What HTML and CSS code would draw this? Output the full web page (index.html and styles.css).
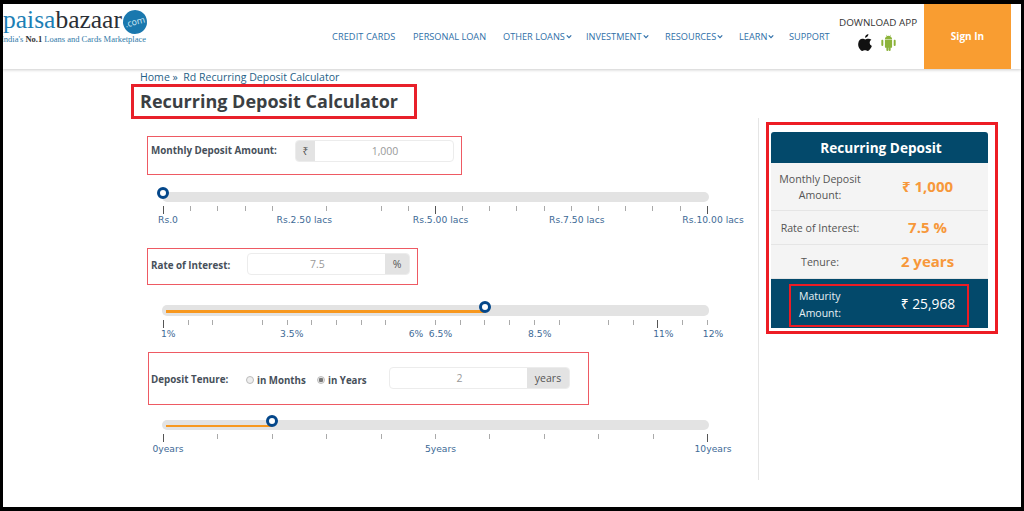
FILE: index.html
```html
<!DOCTYPE html>
<html lang="en">
<head>
<meta charset="utf-8">
<title>Recurring Deposit Calculator</title>
<link rel="stylesheet" href="styles.css">
</head>
<body>
<div class="frame">
  <header class="topbar">
    <div class="logo">
      <div class="logo-main"><span class="logo-paisa">paisa</span><span class="logo-bazaar">bazaar</span><span class="logo-com">.com</span></div>
      <div class="logo-tag">India's <b>No.1</b> <span>Loans and Cards Marketplace</span></div>
    </div>
    <nav class="nav">
      <a class="nav-credit">CREDIT CARDS</a>
      <a class="nav-personal">PERSONAL LOAN</a>
      <a class="nav-other">OTHER LOANS<svg class="caret" viewBox="0 0 8 6"><path d="M1 1.5 4 4.5 7 1.5" fill="none" stroke="#2f6fa8" stroke-width="1.6"/></svg></a>
      <a class="nav-invest">INVESTMENT<svg class="caret" viewBox="0 0 8 6"><path d="M1 1.5 4 4.5 7 1.5" fill="none" stroke="#2f6fa8" stroke-width="1.6"/></svg></a>
      <a class="nav-res">RESOURCES<svg class="caret" viewBox="0 0 8 6"><path d="M1 1.5 4 4.5 7 1.5" fill="none" stroke="#2f6fa8" stroke-width="1.6"/></svg></a>
      <a class="nav-learn">LEARN<svg class="caret" viewBox="0 0 8 6"><path d="M1 1.5 4 4.5 7 1.5" fill="none" stroke="#2f6fa8" stroke-width="1.6"/></svg></a>
      <a class="nav-support">SUPPORT</a>
    </nav>
    <div class="app">
      <div class="app-title">DOWNLOAD APP</div>
      <div class="app-icons">
        <svg class="icon-apple" viewBox="0 0 16 19"><path fill="#111" d="M11.200 0c.1 1.100-.3 2.100-1 2.900-.7.8-1.700 1.300-2.700 1.200-.1-1 .4-2.100 1-2.800C9.200.6 10.300.1 11.200 0zM14.600 6.500c-1.200.8-1.900 1.900-1.900 3.300 0 1.600.9 2.900 2.400 3.500-.4 1.200-1 2.300-1.700 3.300-.9 1.300-1.800 2.300-2.900 2.300-1.200 0-1.700-.7-3.100-.7-1.400 0-1.900.7-3.100.7-1.100 0-2-1.100-2.900-2.400C.2 14.800-.4 12.700-.1 10.600.2 7.700 2.100 5.400 4.600 5.400c1.300 0 2.300.8 3.200.8.800 0 2-.9 3.500-.8 1.300 0 2.500.4 3.300 1.100z"/></svg>
        <svg class="icon-android" viewBox="0 0 16 19"><path fill="#8cb33a" d="M4 6.500h8v8a1 1 0 0 1-1 1h-.6v2.400a1.100 1.100 0 0 1-2.200 0v-2.400H7.800v2.400a1.100 1.100 0 0 1-2.200 0v-2.400H5a1 1 0 0 1-1-1zM1.100 6.500c.6 0 1.100.5 1.100 1.100v4.800a1.100 1.100 0 0 1-2.200 0V7.600c0-.6.5-1.100 1.100-1.100zM14.900 6.500c.6 0 1.100.5 1.100 1.100v4.800a1.100 1.100 0 0 1-2.200 0V7.600c0-.6.5-1.100 1.100-1.100zM4 5.800C4 4.300 4.900 3 6.200 2.400L5.300 1l.3-.2 1 1.400a4.400 4.400 0 0 1 2.800 0l1-1.400.3.200-.9 1.400C11.100 3 12 4.300 12 5.800z"/></svg>
      </div>
    </div>
    <a class="signin">Sign In</a>
  </header>

  <main class="page">
    <section class="calc">
      <div class="crumb">Home »&nbsp; Rd Recurring Deposit Calculator</div>
      <h1 class="title">Recurring Deposit Calculator</h1>

      <div class="field field-amount">
        <label class="field-label">Monthly Deposit Amount:</label>
        <div class="group group-amount">
          <span class="addon addon-rupee">₹</span>
          <span class="value">1,000</span>
        </div>
      </div>
      <div class="slider slider-amount">
        <div class="track"><span class="thumb thumb-amount"></span></div>
        <div class="ticks">
          <i class="major"></i><i></i><i></i><i></i><i></i><i class="off"></i><i></i><i class="off"></i><i></i><i></i><i class="major"></i><i></i><i></i><i></i><i></i><i></i><i></i><i></i><i></i><i></i><i class="major"></i>
        </div>
        <div class="scale">
          <span class="first" style="left:0%">Rs.0</span>
          <span style="left:25%">Rs.2.50 lacs</span>
          <span style="left:50%">Rs.5.00 lacs</span>
          <span style="left:75%">Rs.7.50 lacs</span>
          <span style="left:100%">Rs.10.00 lacs</span>
        </div>
      </div>

      <div class="field field-rate">
        <label class="field-label">Rate of Interest:</label>
        <div class="group group-rate">
          <span class="value">7.5</span>
          <span class="addon addon-pct">%</span>
        </div>
      </div>
      <div class="slider slider-rate">
        <div class="track track-fill"><span class="fill fill-rate"></span><span class="thumb thumb-rate"></span></div>
        <div class="ticks">
          <i class="major"></i><i></i><i></i><i class="off"></i><i></i><i></i><i></i><i></i><i></i><i></i><i class="off"></i><i></i><i></i><i></i><i></i><i></i><i></i><i class="off"></i><i></i><i></i><i class="major"></i><i></i><i></i>
        </div>
        <div class="scale">
          <span class="first-pct" style="left:0%">1%</span>
          <span style="left:22.7%">3.5%</span>
          <span style="left:45.5%">6%</span>
          <span style="left:50%">6.5%</span>
          <span style="left:68.2%">8.5%</span>
          <span style="left:90.9%">11%</span>
          <span style="left:100%">12%</span>
        </div>
      </div>

      <div class="field field-tenure">
        <label class="field-label">Deposit Tenure:</label>
        <span class="radio radio-months"><span class="dot"></span>in Months</span>
        <span class="radio radio-years"><span class="dot dot-on"></span>in Years</span>
        <div class="group group-tenure">
          <span class="value">2</span>
          <span class="addon addon-years">years</span>
        </div>
      </div>
      <div class="slider slider-tenure">
        <div class="track track-fill"><span class="fill fill-tenure"></span><span class="thumb thumb-tenure"></span></div>
        <div class="ticks">
          <i class="major"></i><i></i><i></i><i></i><i></i><i></i><i></i><i></i><i></i><i></i><i class="major"></i>
        </div>
        <div class="scale">
          <span style="left:0%">0years</span>
          <span style="left:50%">5years</span>
          <span style="left:100%">10years</span>
        </div>
      </div>
    </section>

    <aside class="side">
      <div class="outline">
        <div class="card">
          <h2 class="card-head">Recurring Deposit</h2>
          <div class="row row-a"><div class="row-label">Monthly Deposit Amount:</div><div class="row-value">₹ 1,000</div></div>
          <div class="row row-b"><div class="row-label">Rate of Interest:</div><div class="row-value">7.5 %</div></div>
          <div class="row row-b"><div class="row-label">Tenure:</div><div class="row-value">2 years</div></div>
          <div class="result">
            <div class="result-box">
              <div class="result-label">Maturity Amount:</div>
              <div class="result-value">₹ 25,968</div>
            </div>
          </div>
        </div>
      </div>
    </aside>
  </main>
</div>
</body>
</html>
```
FILE: styles.css
```css
* { box-sizing: border-box; }
html, body { margin: 0; height: 511px; overflow: hidden; background: #000; }
body { font-family: "Open Sans", "Noto Sans", sans-serif; color: #3d4044; }
.frame { margin: 4px 3px; height: 503px; background: #fff; overflow: hidden; }

.topbar { display: flex; height: 65px; background: #fff; box-shadow: 0 1px 3px #ccc; position: relative; }
.logo { width: 329px; overflow: hidden; flex: none; padding-top: 1px; }
.logo-main { display: flex; align-items: flex-start; height: 28px; font-family: "Liberation Serif", serif; font-size: 25.500px; line-height: 30px; white-space: nowrap; }
.logo-paisa { color: #1d7fb5; }
.logo-bazaar { color: #2b2f36; }
.logo-com { flex: none; width: 24px; height: 24px; margin-left: 1px; margin-top: 5px; border-radius: 50%; background: #1a78ae; color: #cfe8f5; font: 9px/24px "Open Sans", sans-serif; text-align: center; transform: rotate(-15deg); overflow: hidden; }
.logo-tag { margin-left: -2px; font-family: "Liberation Serif", serif; font-size: 8.500px; line-height: 12px; color: #2f7aa8; white-space: nowrap; }
.logo-tag b { color: #333; }
.nav { display: flex; width: 500px; flex: none; padding-top: 26px; font-size: 9.200px; line-height: 14px; color: #2f6fa8; white-space: nowrap; }
.nav a { display: block; }
.nav-credit { width: 81px; letter-spacing: .1px; }
.nav-personal { width: 90px; }
.nav-other { width: 83px; }
.nav-invest { width: 79px; }
.nav-res { width: 74px; }
.nav-learn { width: 50px; }
.caret { width: 6px; height: 5px; margin-left: 1px; vertical-align: 1px; }
.app { width: 92px; flex: none; padding: 11px 0 0 7px; }
.app-title { font-size: 9.850px; line-height: 14px; color: #333; white-space: nowrap; }
.app-icons { display: flex; gap: 8px; margin: 5px 0 0 19px; }
.icon-apple, .icon-android { width: 15px; height: 17px; display: block; }
.signin { width: 87px; flex: none; background: #f99d31; color: #fff; font-size: 10px; font-weight: 700; line-height: 65px; text-align: center; }

.page { display: flex; height: 438px; }
.calc { width: 755px; padding-left: 128px; flex: none; }
.crumb { margin: 2px 0 0 9px; font-size: 10.550px; line-height: 13px; color: #1f5f86; white-space: nowrap; height: 13px; }
.title { width: 286px; height: 35px; margin: 0; padding-left: 6px; border: 3px solid #e8202a; font-size: 18px; font-weight: 700; line-height: 29px; color: #3b3f43; white-space: nowrap; }

.field { display: flex; border: 1px solid #ee5a63; margin-left: 16px; }
.field-label { font-size: 9.800px; font-weight: 700; color: #47505a; white-space: nowrap; line-height: 22px; }
.field-amount { width: 315px; height: 39px; margin-top: 17px; padding: 3px 7px 0 3px; }
.field-amount .field-label { width: 144px; }
.field-rate { width: 271px; height: 37px; padding: 4px 7px 0 3px; }
.field-rate .field-label { width: 96px; line-height: 25px; }
.field-tenure { width: 441px; height: 53px; margin-left: 17px; padding: 14px 18px 0 2px; }
.field-tenure .field-label { width: 94px; margin-top: 2px; }

.group { display: flex; height: 22px; flex: 1; border: 1px solid #ececec; border-radius: 4px; overflow: hidden; font-size: 10.500px; line-height: 20px; color: #999; }
.value { flex: 1; padding-left: 2px; text-align: center; }
.addon { background: #e3e3e3; color: #555; text-align: center; flex: none; }
.addon-rupee { width: 19px; }
.addon-pct { width: 24px; }
.addon-years { width: 42px; }

.radio { display: flex; align-items: center; height: 22px; margin-top: 2px; font-size: 9.700px; font-weight: 700; color: #47505a; white-space: nowrap; }
.radio-months { width: 71px; margin-left: 1px; }
.radio-years { width: 72px; }
.dot { width: 8px; height: 8px; margin-right: 3px; border-radius: 50%; border: 1px solid #bbb; background: #eee; flex: none; }
.dot-on { background: radial-gradient(circle, #777 0 2px, #e8e8e8 2.500px); }

.slider { margin-left: 31px; width: 547px; }
.slider-amount { height: 73px; padding-top: 17px; }
.slider-rate { height: 67px; padding-top: 20px; }
.slider-tenure { padding-top: 15px; }
.track { position: relative; height: 10px; background: #e3e3e3; border-radius: 5px; width: 547px; }
.slider-rate .track { height: 11px; }
.fill { position: absolute; left: 4px; top: 5px; height: 3px; background: #f7981f; }
.fill-rate { width: 318px; }
.fill-tenure { height: 2px; width: 106px; }
.thumb { position: absolute; width: 12px; height: 12px; border-radius: 50%; border: 3.500px solid #04478a; background: #fff; }
.thumb-amount { left: -5px; top: -5px; }
.thumb-rate { left: 317px; top: -4px; }
.thumb-tenure { left: 104px; top: -5px; }

.ticks { display: flex; justify-content: space-between; width: 546px; height: 8px; margin: 4px 0 0 0; padding-left: 1px; }
.ticks i { display: block; width: 1px; height: 5px; background: #aaa; }
.ticks i.major { height: 8px; background: #555; }
.ticks i.off { visibility: hidden; }
.scale { position: relative; height: 14px; margin: -1px 0 0 1px; width: 545px; font-family: "DejaVu Sans", sans-serif; font-size: 9.200px; line-height: 14px; color: #3e6a96; }
.slider-tenure .scale { margin-top: 0; }
.scale span { position: absolute; white-space: nowrap; transform: translateX(calc(-50% + 5px)); }
.scale span.first { transform: translateX(-5px); }
.scale span.first-pct { transform: translateX(-2px); }

.side { flex: none; width: 263px; height: 362px; margin-top: 49px; border-left: 1px solid #e5e5e5; padding: 4px 0 0 7px; align-self: flex-start; }
.outline { width: 232px; height: 212px; border: 3px solid #ed1c24; padding: 7px 7px 0 2px; }
.card { width: 217px; }
.card-head { margin: 0; height: 31px; padding-left: 3px; background: #03496b; border-radius: 3px 3px 0 0; color: #fff; text-align: center; font-size: 13.600px; font-weight: 700; line-height: 31px; }
.row { display: flex; align-items: center; background: #f4f4f4; border-bottom: 1px solid #e5e5e5; }
.row-a { height: 48px; }
.row-b { height: 34px; }
.row-label { width: 98px; text-align: center; font-size: 10.600px; line-height: 16px; color: #555; }
.row-value { flex: 1; margin: 0 2px 2px 0; text-align: center; font-size: 15px; font-weight: 700; color: #f7983a; white-space: nowrap; }
.result { height: 49px; background: #03496b; padding: 5px 19px 0 18px; }
.result-box { display: flex; align-items: center; height: 43px; border: 2px solid #ed1c24; color: #fff; }
.result-label { width: 98px; padding: 0 40px 2px 8px; font-size: 10.500px; line-height: 17px; color: #e8f0f4; }
.result-value { flex: 1; padding-bottom: 5px; font-size: 13.800px; text-align: center; white-space: nowrap; }
```
